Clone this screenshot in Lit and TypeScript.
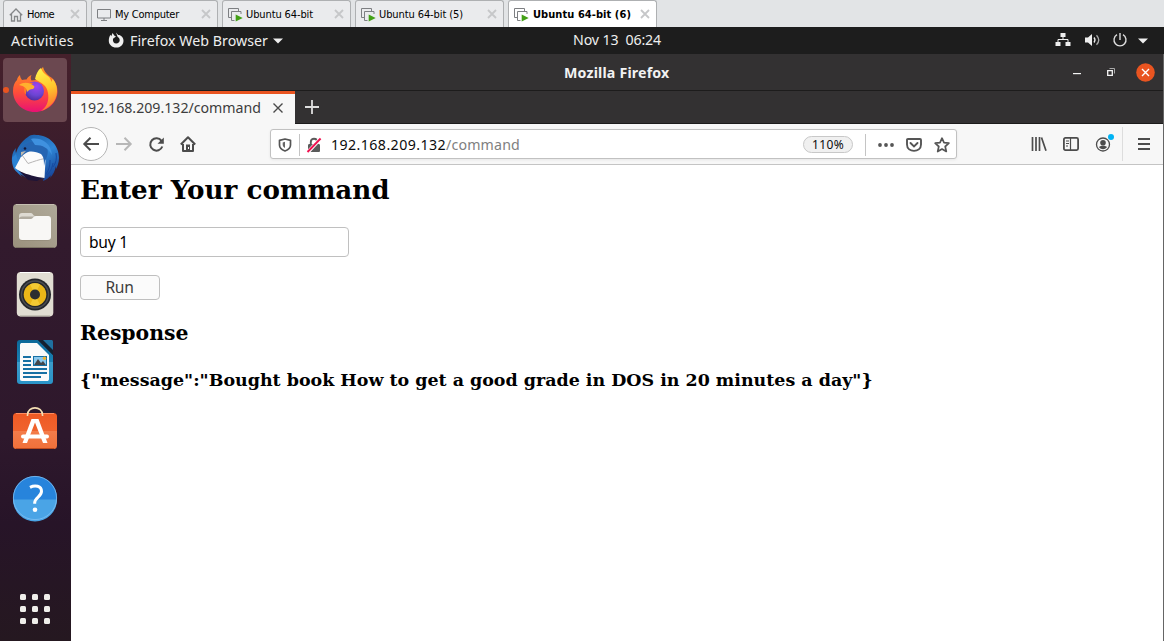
import { LitElement, html, css, svg } from "lit";
import { customElement, property } from "lit/decorators.js";

/** A one-line label whose letter spacing is adjusted to a given advance width. */
@customElement("fit-label")
class FitLabel extends LitElement {
  @property({ type: Number }) width = 0;
  static styles = css`
    :host { display: block; flex: none; white-space: pre; line-height: 20px; height: 20px; }
    .run { display: inline-block; white-space: pre; }
  `;
  firstUpdated() {
    const run = this.renderRoot.querySelector(".run") as HTMLElement;
    const natural = run.getBoundingClientRect().width;
    const count = (this.textContent || "").length;
    if (this.width && count) {
      run.style.letterSpacing = `${(this.width - natural) / count}px`;
    }
  }
  render() { return html`<span class="run"><slot></slot></span>`; }
}

const icon = (w: number, h: number, body: unknown, cls = "") =>
  html`<svg class="icon ${cls}" width=${w} height=${h} viewBox="0 0 ${w} ${h}">${body}</svg>`;

const closeX = icon(10, 10, svg`<path d="M1 1l8 8M9 1l-8 8" stroke="#c6c7c9" stroke-width="1.8" fill="none"/>`);
const houseIcon = icon(14, 14, svg`<path d="M.8 7.2L7 1l6.2 6.2M2.5 6v7h3V8.5h3V13h3V6" stroke="#858789" stroke-width="1.3" fill="none"/>`);
const monitorIcon = icon(14, 14, svg`<path d="M.5 1.5h13v8.5H.5zM7 10v2.5M4 12.5h6" stroke="#7d7f82" stroke-width="1" fill="none"/>`);
const vmIcon = icon(15, 14, svg`<path d="M3.5 9.500H.5V.5h10V3" stroke="#7d7f82" fill="none"/><path d="M3.500 12.500V3.500h9.500V6M3.500 12.500h3" stroke="#7d7f82" fill="none"/><path d="M7.700 6.500l7 3.500-7 3.500z" fill="#43a016"/>`);

const vmTabs = [
  { label: "Home", glyph: houseIcon, width: 84, text: 27, cls: "" },
  { label: "My Computer", glyph: monitorIcon, width: 127, text: 64, cls: "" },
  { label: "Ubuntu 64-bit", glyph: vmIcon, width: 129, text: 67, cls: "" },
  { label: "Ubuntu 64-bit (5)", glyph: vmIcon, width: 149, text: 84, cls: "" },
  { label: "Ubuntu 64-bit (6)", glyph: vmIcon, width: 149, text: 98, cls: "active" },
];

const firefoxIcon = icon(48, 48, svg`
  <defs>
    <linearGradient id="ffl" x1="0" y1="0" x2="0" y2="1"><stop offset="0" stop-color="#ff9a22"/><stop offset=".55" stop-color="#ff5038"/><stop offset="1" stop-color="#e91173"/></linearGradient>
    <radialGradient id="ffg" cx=".6" cy=".25" r=".8"><stop offset="0" stop-color="#a043f0"/><stop offset=".6" stop-color="#6b45d3"/><stop offset="1" stop-color="#4b2b9c"/></radialGradient>
    <linearGradient id="ffy" x1=".4" y1="0" x2=".6" y2="1"><stop offset="0" stop-color="#fff14a"/><stop offset=".5" stop-color="#ffc52c"/><stop offset="1" stop-color="#ff6a30"/></linearGradient>
  </defs>
  <path d="M24 46C11 46 2 36 2 25c0-5 1.500-8.500 4-11 .2-2 1.500-4 3-5 .2 2 .8 3.500 2 5 1.500-.6 3-.7 4.500-.5 1-2 3-4 5-4.500-1 2-1 4 0 5.500L25 14l3-7c1-3 3-5 4-6 1 4 3 6 6 9l3 2 2 2c1.500 3 3.500 6 3.500 12C46 37 36 46 24 46z" fill="url(#ffl)"/>
  <path d="M30 2c1 4 4 6 8 9 1 1 2 3 2.500 5l1-3c3 3 5 8 4.500 13-.5 9-7 16-16 19 7-5 8-12 7-18-1-8-7-10-13-14 1-5 3-9 6-11z" fill="url(#ffy)"/>
  <circle cx="23.500" cy="25" r="9.500" fill="url(#ffg)"/>
  <path d="M14 20c1-3 5-4 9-3-3 1-4 2-4 4-3 1-4 4-4 8-2-3-3-6-1-9z" fill="#ff7b25"/>
  <path d="M8 19c5-4 12-2 15 1 1 1 0 2-1 3-3 0-4 1-6 3 1-3-3-6-8-7z" fill="#ffb02e"/>`, "fox");

const thunderbirdIcon = icon(50, 50, svg`
  <defs><linearGradient id="tb" x1=".2" y1="0" x2=".8" y2="1"><stop offset="0" stop-color="#1a5aa5"/><stop offset=".5" stop-color="#2f86d6"/><stop offset="1" stop-color="#143f93"/></linearGradient></defs>
  <path d="M17 3c2-2 5-2.500 8-2 13 0 23 10 23 23 0 5-2 9-3 11v-3c-1 5-3 9-6 12l1-3c-2 3-5 5-8 6l1-3c-8 3-16 2-22-3C4 39 0 32 1 23c.4-4 2-7 4-9-.5 2-.6 4 0 5 2-7 6-12 12-16z" fill="url(#tb)"/>
  <path d="M1 24c1 8 5 15 10 19-4-5-5-10-4-16L5 20z" fill="#2b83d5"/>
  <path d="M7 36l27 7-8 4-9-1z" fill="#1d1438"/>
  <path d="M4 34l8-15c5-3 13-2 20-1l2.500 8-1 18-7-1c-8-2-16-4-22.500-9z" fill="#fbfbfb"/>
  <path d="M11 21l6 8.500c6-2 11-4 17-5" fill="none" stroke="#b7b5b5" stroke-width="1"/>
  <path d="M10 15c5-9 19-10 25-3 3 4 2 10-1 15l-1 5c0-5 0-9-3-12-4-2-9-3-13-2-3 1-5 3-7 5-1-3-1-5 0-8z" fill="#2565b2"/>
  <path d="M20 5c10-2 20 4 21 16-4-7-9-10-17-10z" fill="#3f91df"/>
  <circle cx="14" cy="14.500" r="1.300" fill="#111a3c"/><path d="M10 18l5-1-5 5z" fill="#bdb8ad"/>
  <path d="M45 19c1 6 0 10-3 14M39 26c0 6-1 10-4 14M42 29c-1 6-3 9-6 12" stroke="#1649a0" fill="none"/>`, "tbird");

const filesIcon = icon(46, 46, svg`
  <defs><linearGradient id="fl" x1="0" y1="1" x2="1" y2="0"><stop offset="0" stop-color="#9b917d"/><stop offset="1" stop-color="#afa999"/></linearGradient></defs>
  <rect x="1" y="1" width="44" height="44" rx="4" fill="url(#fl)"/><path d="M4 1.500h38" stroke="#c5bfb1"/><path d="M4 44.500h38" stroke="#7c7464"/>
  <path d="M7 13c0-2 1-3 3-3h9c2 0 2 3 4 3h14v5H7z" fill="#dedbd3"/>
  <rect x="7" y="13.500" width="32" height="24" rx="3" fill="#6e6758" opacity=".4"/>
  <path d="M7 16h12c2 0 2-3 5-3h12c2 0 3 1 3 3v18c0 2-1 3-3 3H10c-2 0-3-1-3-3z" fill="#f8f7f5"/>`);

const rhythmboxIcon = icon(38, 46, svg`
  <rect x=".8" y="1" width="36.500" height="44.500" rx="4" fill="#e1ddd2"/><path d="M4 1.500h30" stroke="#fff"/><path d="M4 45h30" stroke="#aaa69b"/>
  <circle cx="19" cy="23.500" r="16" fill="#25272b"/><circle cx="19" cy="23.500" r="13.500" fill="none" stroke="#4b4d51" stroke-width="1.500"/>
  <circle cx="19" cy="23.500" r="11.300" fill="#eab718"/><path d="M19 23.500l-5-10.200a11.300 11.300 0 0 1 10 0zM19 23.500l-5 10.200a11.300 11.300 0 0 0 10 0z" fill="#f6d03c" opacity=".75"/>
  <circle cx="19" cy="23.500" r="5" fill="#2d2e30"/>`);

const writerIcon = icon(38, 46, svg`
  <defs><linearGradient id="wr" x1="0" y1="0" x2="0" y2="1"><stop offset="0" stop-color="#0b6898"/><stop offset=".49" stop-color="#1a80b3"/><stop offset=".5" stop-color="#3b9bc9"/><stop offset="1" stop-color="#2a94c8"/></linearGradient></defs>
  <path d="M4 1h18l15 15v26c0 2-1 3-3 3H4c-2 0-3-1-3-3V4c0-2 1-3 3-3z" fill="url(#wr)"/>
  <path d="M22 1h6l9 9v6z" fill="#14202f"/><path d="M27 1h8c1.500 0 2 .5 2 2v8z" fill="#1f709f"/>
  <path d="M6 4h15l12 12v24c0 1.500-1 2-2 2H6c-1.500 0-2-1-2-2V6c0-1.500 1-2 2-2z" fill="#fafafa"/>
  <path d="M7 18h8M7 22h8M7 26h8M7 30h24M7 34h24M7 38h18" stroke="#1670a4" stroke-width="2"/>
  <rect x="17.500" y="17.500" width="13" height="9" fill="#88c7ec" stroke="#1670a4" stroke-width="1"/><path d="M18 26l4-6 3 4 2-2 3 4z" fill="#44464a"/><circle cx="28.500" cy="19.300" r="1.700" fill="#f3b32b"/>`);

const softwareIcon = icon(46, 46, svg`
  <defs><linearGradient id="sw" x1="0" y1="0" x2="0" y2="1"><stop offset="0" stop-color="#ee5924"/><stop offset=".5" stop-color="#f0632e"/><stop offset=".51" stop-color="#f37c4a"/><stop offset="1" stop-color="#f0703a"/></linearGradient></defs>
  <rect x="1" y="8" width="44" height="36" rx="3.500" fill="url(#sw)"/><path d="M4 8.500h38" stroke="#ff8c5e"/><path d="M4 43.500h38" stroke="#bd4a1e"/>
  <path d="M15.500 11V10c0-9.500 15-9.500 15 0v1" fill="none" stroke="#f4dfb3" stroke-width="1.600"/>
  <path d="M10.500 38L19.500 14h7L35.500 38h-4.500L23 17.500 15 38z" fill="#fff"/>
  <rect x="9" y="29.500" width="28" height="4" rx="2" fill="#fff"/>`, "store");

const helpIcon = icon(46, 46, svg`
  <circle cx="23" cy="23" r="22" fill="#2784dc"/><path d="M1 24.500a22 22 0 0 0 44 0z" fill="#4aa4e6"/>
  <circle cx="23" cy="23" r="21.600" fill="none" stroke="#80c0f2" stroke-width=".8"/>
  <path d="M18 12.300c5-2.500 11.500-1.500 11.500 4 0 5.500-6.800 6-6.800 11.500v1" fill="none" stroke="#fff" stroke-width="3"/><circle cx="23" cy="34.700" r="2.300" fill="#fff"/>`, "help");

const gridIcon = icon(30, 30, svg`${[0, 12, 24].map((y) => [0, 12, 24].map((x) => svg`<rect x=${x} y=${y} width="6" height="6" rx="1.500" fill="#f0eeeb"/>`))}`);

@customElement("app-root")
class AppRoot extends LitElement {
  static styles = css`
    :host { display: block; width: 1164px; height: 641px; overflow: hidden; font-family: "Noto Sans", sans-serif; background: #fff; }
    * { box-sizing: border-box; }
    .icon { display: block; flex: none; overflow: visible; }
    .row { display: flex; align-items: center; }
    .vm { height: 27px; background: #e2e4e6; display: flex; gap: 4px; padding-left: 3px; font: 11px "DejaVu Sans Condensed", "DejaVu Sans", sans-serif; color: #000; }
    .vtab { display: flex; align-items: center; height: 27px; border: 1px solid #aeb0b2; border-bottom: 0; border-radius: 3px 3px 0 0; background: #eaebed; padding: 1px 6px 0 5px; }
    .vtab fit-label { margin-left: 4px; }
    .vtab .glyph { width: 14px; }
    .vtab .x { margin: -1px 0 0 auto; }
    .vtab.active { background: #fff; font-weight: 700; }
    .vtab.active fit-label { margin-left: 5px; }
    .top { height: 27px; background: #1d1d1d; color: #eee; font-size: 14.200px; padding-left: 11px; }
    .ff { margin: -2px 0 0 34px; } .app { margin-left: 6px; } .down1 { margin-left: 5px; }
    .clock { margin: -2px 0 0 290px; width: 88px; } .net { margin: -1px 0 0 394px; } .vol { margin: -1px 0 0 14px; } .pow { margin: -1px 0 0 13px; } .down2 { margin-left: 11px; }
    .main { display: flex; height: 587px; }
    .dock { width: 71px; background: linear-gradient(#45202b, #321a2d 32%, #2e182c 65%, #271428 80%, #251820); display: flex; flex-direction: column; align-items: center; padding-top: 4px; }
    .tile { width: 64px; height: 64px; margin: 0 1px 4px 0; border-radius: 4px; display: grid; place-items: center; flex: none; }
    .tile.on { background: #6b4850; position: relative; }
    .tile.on::before { content: ""; position: absolute; left: 0; top: 29px; width: 6px; height: 6px; border-radius: 50%; background: #e95420; }
    .fox { margin-bottom: 1px; } .help { margin-bottom: 1px; }
    .tbird { margin: 1px 0 0 1px; }
    .store { margin-bottom: 5px; }
    .apps { margin: 60px 1.500px 0 0; }
    .win { width: 1093px; border-right: 1px solid #656565; display: flex; flex-direction: column; }
    .title { height: 37px; background: #333132; border-bottom: 1px solid #1d1c1c; color: #f2f2f2; font-size: 14.200px; font-weight: 700; }
    .caption { margin: 2px 0 0 493px; width: 106px; }
    .min { margin: 4px 0 0 403px; } .max { margin-left: 26px; } .cls { margin-left: 21px; }
    .strip { height: 33px; background: #333132; display: flex; align-items: center; border-bottom: 1px solid #1c1b1b; }
    .tab { width: 224px; height: 33px; align-self: flex-start; background: #f7f7f7; border-top: 3px solid #e95420; color: #3d3d3d; font-size: 14.200px; padding: 0 0 2px 9px; }
    .tx { margin: 0 0 0 12px; } .plus { margin-left: 10px; }
    .bar { height: 41px; background: #f7f7f7; border-bottom: 1px solid #c4c4c4; display: flex; align-items: center; padding-left: 3px; }
    .back { width: 34px; height: 34px; border: 1px solid #b5b5b5; border-radius: 50%; background: #fff; display: grid; place-items: center; }
    .fwd { margin-left: 8px; } .rel { margin-left: 17px; } .home { margin-left: 16px; }
    .url { width: 687px; height: 30px; border: 1px solid #c1c1c1; border-radius: 3px; background: #fff; box-shadow: 0 1px 3px #0001; display: flex; align-items: center; margin-left: 74px; padding: 1px 0 0 7px; font-size: 14.200px; color: #0c0c0d; }
    .dim { color: #808080; }
    .sep { width: 1px; background: #c4c4c4; height: 22px; flex: none; }
    .shield + .sep { margin-left: 7px; } .lock { margin: 0 10px 0 7px; }
    .zoomv { width: 50px; height: 17px; border-radius: 9px; border: 1px solid #c8c8c8; background: #f0f0f0; display: flex; align-items: center; justify-content: center; font-size: 12px; margin-left: 283px; }
    .zoomv + .sep { margin-left: 12px; } .dots { margin-left: 12px; } .pocket { margin-left: 12px; } .star { margin-left: 12px; }
    .lib { margin-left: 74px; } .side { margin-left: 16px; } .acct { margin-left: 17px; }
    .acct + .sep { margin-left: 8px; height: 34px; background: #ddd; } .menu { margin-left: 15px; }
    .page { flex: 1; background: #fff; padding: 0 9px; font-family: "DejaVu Serif", serif; color: #000; }
    h2, h3, h4 { margin: 0; font-weight: 700; white-space: nowrap; }
    h2 { font-size: 26.200px; line-height: 31px; margin-top: 9px; }
    .field { width: 269px; height: 30px; margin-top: 22px; border: 1px solid #c0c0c0; border-radius: 4px; padding-left: 8px; font: 15.600px "Noto Sans", sans-serif; display: flex; align-items: center; }
    .run { width: 80px; height: 25px; margin-top: 18px; border: 1px solid #bfbfbf; border-radius: 4px; background: #fbfbfb; font: 15.600px "Noto Sans", sans-serif; color: #3d3d3d; display: flex; align-items: center; justify-content: center; padding: 0 1px 2px 0; }
    h3 { font-size: 20.400px; line-height: 24px; margin-top: 21px; letter-spacing: -.02px; }
    h4 { font-size: 17.450px; line-height: 21px; margin-top: 25px; }
  `;

  render() {
    return html`
      <div class="vm">
        ${vmTabs.map((t) => html`<div class="vtab ${t.cls}" style="width:${t.width}px"><span class="glyph">${t.glyph}</span><fit-label width=${t.text}>${t.label}</fit-label><span class="x">${closeX}</span></div>`)}
      </div>
      <div class="top row">
        <fit-label width="63">Activities</fit-label>
        ${icon(16, 16, svg`<path d="M8 .5l2.200 2.600C13 3 15.500 5.500 15.500 8.700c0 4-3.200 6.900-7.300 6.900C4 15.600.8 12.500.8 8.700c0-2.500.6-4.500 1.700-6l.8 1.500L4.500 1l2 2.700 1.500.8-3 2.200c-.5 3 1 4.800 3.200 4.800 2 0 3.500-1.400 3.500-3.300 0-1.500-.8-2.500-2-3.200z" fill="#f0f0f0"/>`, "ff")}
        <fit-label class="app" width="138">Firefox Web Browser</fit-label>
        ${icon(10, 6, svg`<path d="M0 .5h10L5 5.500z" fill="#eee"/>`, "down1")}
        <fit-label class="clock" width="88">Nov 13  06:24</fit-label>
        ${icon(16, 14, svg`<path d="M5.500 0h5v4h-5zM.5 9h5v4h-5zM10.500 9h5v4h-5z" fill="#eee"/><path d="M8 4v2.500M3 9V6.500h10V9" fill="none" stroke="#eee"/>`, "net")}
        ${icon(15, 14, svg`<path d="M0 4.500h3L7 1v12L3 9.500H0z" fill="#eee"/><path d="M9 4.500q2 2.500 0 5" stroke="#eee" fill="none" stroke-width="1.300"/><path d="M11.500 2.200q4.500 4.800 0 9.600" stroke="#aaa" fill="none" stroke-width="1.300"/>`, "vol")}
        ${icon(14, 14, svg`<path d="M4 1.700a6 6 0 1 0 6 0M7 0v7" stroke="#ddd" fill="none" stroke-width="1.400"/>`, "pow")}
        ${icon(10, 6, svg`<path d="M0 .5h10L5 5.500z" fill="#eee"/>`, "down2")}
      </div>
      <div class="main">
        <div class="dock">
          <div class="tile on">${firefoxIcon}</div>
          <div class="tile">${thunderbirdIcon}</div>
          <div class="tile">${filesIcon}</div>
          <div class="tile">${rhythmboxIcon}</div>
          <div class="tile">${writerIcon}</div>
          <div class="tile">${softwareIcon}</div>
          <div class="tile">${helpIcon}</div>
          <div class="apps">${gridIcon}</div>
        </div>
        <div class="win">
          <div class="title row">
            <fit-label class="caption" width="105.500">Mozilla Firefox</fit-label>
            ${icon(8, 2, svg`<path d="M0 0h8v1.200H0z" fill="#f4f4f4"/>`, "min")}
            ${icon(8, 8, svg`<path d="M.7 2.700h4.600v4.600H.7z" fill="none" stroke="#f4f4f4" stroke-width="1.300"/><path d="M2.500.5h5v5" fill="none" stroke="#aaa"/>`, "max")}
            ${icon(19, 19, svg`<circle cx="9.500" cy="9.500" r="9.300" fill="#e95420"/><path d="M6 6l7 7M13 6l-7 7" stroke="#fff" stroke-width="1.400"/>`, "cls")}
          </div>
          <div class="strip">
            <div class="tab row"><fit-label width="181">192.168.209.132/command</fit-label>${icon(10, 10, svg`<path d="M.5.5l9 9M9.500.5l-9 9" stroke="#4a4a4a" stroke-width="1.400"/>`, "tx")}</div>
            ${icon(14, 14, svg`<path d="M7 0v14M0 7h14" stroke="#dedede" stroke-width="1.800"/>`, "plus")}
          </div>
          <div class="bar">
            <div class="back">${icon(16, 14, svg`<path d="M16 7H1M7.500.8L1.300 7l6.200 6.200" stroke="#4c4c4c" stroke-width="2" fill="none"/>`)}</div>
            ${icon(16, 14, svg`<path d="M0 7h15M8.500.8L14.700 7l-6.200 6.200" stroke="#b7b7b7" stroke-width="2" fill="none"/>`, "fwd")}
            ${icon(15, 15, svg`<path d="M12.500 3.800A6.200 6.200 0 1 0 13.300 9.500" stroke="#4c4c4c" stroke-width="2" fill="none"/><path d="M14.800.5v6.300H8.500z" fill="#4c4c4c"/>`, "rel")}
            ${icon(16, 16, svg`<path d="M.8 8.500L8 1.300l7.200 7.200M3 8v7h10V8" stroke="#4c4c4c" stroke-width="2" fill="none" stroke-linejoin="round"/><path d="M6 15V8.500h4V15z" fill="#4c4c4c"/><path d="M8 11h1v2H8z" fill="#fff"/>`, "home")}
            <div class="url">
              ${icon(14, 14, svg`<path d="M7 1l5.500 1.300V7c0 3-2.500 5-5.500 6C4 12 1.500 10 1.500 7V2.300z" fill="none" stroke="#555" stroke-width="1.700" stroke-linejoin="round"/><path d="M7 3.800V10C5.300 9 4.700 8 4.700 6.500V4.500z" fill="#666"/>`, "shield")}
              <span class="sep"></span>
              ${icon(14, 16, svg`<path d="M1 8.500C1 7.500 1.500 7 2.500 7h9c1 0 1.500.5 1.500 1.500v5c0 1-.5 1.500-1.500 1.500h-9C1.500 15 1 14.500 1 13.500z" fill="#5a5a5a"/><path d="M3.800 8V5c0-4.300 6.400-4.300 6.400 0v3" fill="none" stroke="#5a5a5a" stroke-width="1.900"/><path d="M14 1L1 15" stroke="#fff" stroke-width="3.600"/><path d="M13.600 1.500L.5 15" stroke="#f0104f" stroke-width="1.900"/>`, "lock")}
              <fit-label width="115">192.168.209.132</fit-label><fit-label class="dim" width="74">/command</fit-label>
              <div class="zoomv"><fit-label width="32">110%</fit-label></div><span class="sep"></span>
              ${icon(16, 4, svg`<circle cx="2" cy="2" r="1.900" fill="#555"/><circle cx="8" cy="2" r="1.900" fill="#555"/><circle cx="14" cy="2" r="1.900" fill="#555"/>`, "dots")}
              ${icon(16, 14, svg`<path d="M2 1h12q1 0 1 1v4.500c0 8.500-14 8.500-14 0V2Q1 1 2 1z" fill="none" stroke="#555" stroke-width="1.900"/><path d="M4.500 5L8 8.500 11.500 5" fill="none" stroke="#555" stroke-width="1.900" stroke-linecap="round"/>`, "pocket")}
              ${icon(16, 16, svg`<path d="M8 1.200l2 4.500 4.900.5-3.700 3.300 1.100 5L8 12l-4.300 2.500 1.100-5L1.100 6.200 6 5.700z" fill="none" stroke="#555" stroke-width="1.700" stroke-linejoin="round"/>`, "star")}
            </div>
            ${icon(16, 14, svg`<path d="M1.500 0v14M5 0v14M8.500 0v14M10.500.5l4.500 13.300" stroke="#4c4c4c" stroke-width="1.700"/>`, "lib")}
            ${icon(16, 14, svg`<rect x=".9" y=".9" width="14.200" height="12.200" rx="1.500" fill="none" stroke="#4c4c4c" stroke-width="1.800"/><path d="M7.500 1v12M3 4h3M3 6.500h3M3 9h2" stroke="#4c4c4c" stroke-width="1.200"/>`, "side")}
            ${icon(18, 18, svg`<circle cx="7" cy="9.500" r="6.500" fill="none" stroke="#4c4c4c" stroke-width="1.300"/><circle cx="7" cy="7.800" r="2.800" fill="#4c4c4c"/><path d="M2.800 12q4.200-2.500 8.400 0-2 2.300-4.200 2.300T2.800 12z" fill="#4c4c4c"/><circle cx="15" cy="2" r="3" fill="#00b3f4"/>`, "acct")}
            <span class="sep"></span>
            ${icon(12, 12, svg`<path d="M0 1h12M0 6h12M0 11h12" stroke="#4c4c4c" stroke-width="1.800"/>`, "menu")}
          </div>
          <div class="page">
            <h2>Enter Your command</h2>
            <div class="field"><fit-label width="39">buy 1</fit-label></div>
            <div class="run"><fit-label width="28">Run</fit-label></div>
            <h3>Response</h3>
            <h4>{"message":"Bought book How to get a good grade in DOS in 20 minutes a day"}</h4>
          </div>
        </div>
      </div>`;
  }
}
